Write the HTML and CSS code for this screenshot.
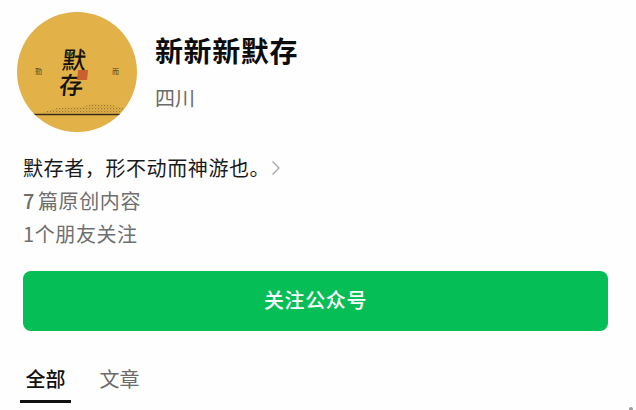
FILE: index.html
```html
<!DOCTYPE html>
<html lang="zh-CN">
<head>
    <meta charset="UTF-8">
    <title>新新新默存</title>
    <link rel="stylesheet" href="styles.css">
</head>
<body>
    <div class="profile">
        <div class="profile-head">
            <div class="avatar">
                <div class="avatar-mark">
                    <span class="side-char">勤</span>
                    <div class="brush">
                        <span>默</span>
                        <span>存</span>
                        <i class="seal"></i>
                    </div>
                    <span class="side-char">而</span>
                </div>
                <svg class="avatar-ground" viewBox="0 0 120 24" width="120" height="24">
                    <defs>
                        <pattern id="speckle" width="3" height="3" patternUnits="userSpaceOnUse">
                            <rect x="0" y="0" width="1.2" height="1.2" fill="#6b5226"/>
                            <rect x="1.6" y="1.7" width="1" height="1" fill="#8a6c32"/>
                        </pattern>
                    </defs>
                    <path d="M24 17 L40 12 L62 11 L76 8 L96 9 L106 12 L108 17 Z" fill="url(#speckle)" opacity="0.6"/>
                    <path d="M16 18.5 H108" stroke="#3a2c18" stroke-width="1.6"/>
                </svg>
            </div>
            <div class="profile-name">
                <h1>新新新默存</h1>
                <p>四川</p>
            </div>
        </div>

        <div class="profile-info">
            <div class="desc">默存者，形不动而神游也。
                <svg class="arrow" viewBox="0 0 10 16" width="10" height="16">
                    <path d="M1.5 1.5 L8 8 L1.5 14.5" fill="none" stroke="#a6a6a6" stroke-width="1.3"/>
                </svg>
            </div>
            <div class="meta"><span class="num">7</span>篇原创内容</div>
            <div class="meta">1个朋友关注</div>
        </div>

        <button class="follow-btn">关注公众号</button>

        <div class="tabs">
            <span class="tab active">全部</span>
            <span class="tab">文章</span>
        </div>
    </div>
    <div class="corner-peek"></div>
</body>
</html>
```

FILE: styles.css
```css
* {
    box-sizing: border-box;
}

html, body {
    height: 100%;
}

body {
    margin: 0;
    overflow: hidden;
    background-color: #fefefe;
    font-family: "Noto Sans CJK SC", "Noto Sans", sans-serif;
    color: #111;
}

.profile {
    padding: 12px 28px 0 23px;
}

/* Header */
.profile-head {
    display: flex;
    align-items: center;
    gap: 18px;
    margin-left: -6px;
}

.avatar {
    position: relative;
    flex: none;
    width: 120px;
    height: 120px;
    border-radius: 50%;
    overflow: hidden;
    background-color: #e2b248;
}

.avatar-mark {
    display: flex;
    align-items: center;
    justify-content: center;
    gap: 19px;
    padding-top: 34px;
}

.side-char {
    font-size: 7px;
    line-height: 8px;
    color: #4a3a18;
}

.brush {
    position: relative;
    display: flex;
    flex-direction: column;
    width: 32px;
    margin: 0 4px 0 -4px;
    font-size: 24px;
    line-height: 25px;
    font-weight: 500;
    text-align: center;
    color: #17120a;
    transform: skewX(-6deg);
}

.seal {
    position: absolute;
    top: 24px;
    right: 1px;
    width: 10px;
    height: 10px;
    background-color: #c9602f;
}

.avatar-ground {
    position: absolute;
    left: 0;
    bottom: 12px;
}

.profile-name {
    margin-top: -2px;
}

.profile-name h1 {
    margin: 0;
    font-size: 28px;
    line-height: 38px;
    font-weight: 700;
    letter-spacing: 0.6px;
    color: #0c0c0c;
}

.profile-name p {
    margin: 15px 0 0;
    font-size: 20px;
    line-height: 28px;
    color: #6b6b6b;
}

/* Info rows */
.profile-info {
    margin-top: 19px;
    font-size: 20px;
    line-height: 33px;
    letter-spacing: 0.6px;
}

.desc {
    display: flex;
    align-items: center;
    color: #1a1a1a;
}

.arrow {
    margin-left: 1px;
}

.meta {
    color: #6f6f6f;
}

.num {
    margin-right: 3px;
    font-weight: 500;
}

.follow-btn {
    display: block;
    width: 100%;
    height: 60px;
    margin-top: 21px;
    padding-bottom: 4px;
    border: none;
    border-radius: 8px;
    background-color: #06be56;
    color: #fff;
    font-family: inherit;
    font-size: 20px;
    font-weight: 500;
    letter-spacing: 0.6px;
}

/* Tabs */
.tabs {
    display: flex;
    gap: 23px;
    margin: 28px 0 0 -3px;
}

.tab {
    width: 51px;
    height: 44px;
    font-size: 20px;
    line-height: 40px;
    text-align: center;
    color: #6b6b6b;
}

.tab.active {
    color: #111;
    font-weight: 500;
    border-bottom: 3px solid #111;
}

/* top of a floating control, cut off by the window edge */
.corner-peek {
    position: absolute;
    right: 3px;
    bottom: 0;
    width: 4px;
    height: 3px;
    border-radius: 2px 2px 0 0;
    background-color: #a0a0a0;
}
```
